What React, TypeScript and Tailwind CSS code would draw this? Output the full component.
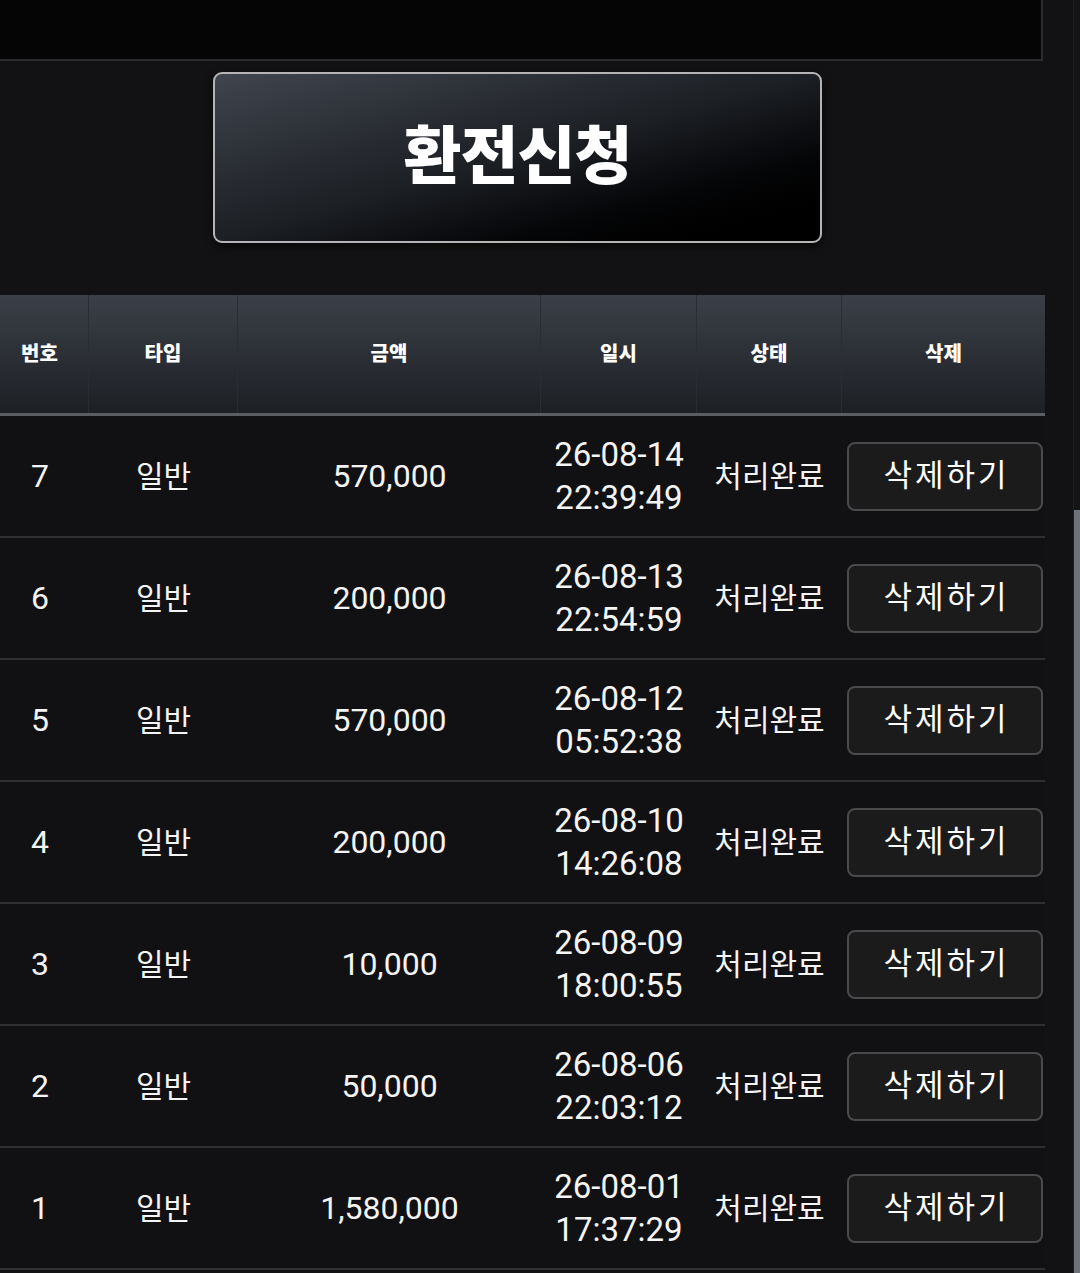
import React from 'react';

const rows = [
  { no: 7, type: '일반', amount: '570,000', date: '26-08-14', time: '22:39:49' },
  { no: 6, type: '일반', amount: '200,000', date: '26-08-13', time: '22:54:59' },
  { no: 5, type: '일반', amount: '570,000', date: '26-08-12', time: '05:52:38' },
  { no: 4, type: '일반', amount: '200,000', date: '26-08-10', time: '14:26:08' },
  { no: 3, type: '일반', amount: '10,000', date: '26-08-09', time: '18:00:55' },
  { no: 2, type: '일반', amount: '50,000', date: '26-08-06', time: '22:03:12' },
  { no: 1, type: '일반', amount: '1,580,000', date: '26-08-01', time: '17:37:29' },
];

const headers = ['번호', '타입', '금액', '일시', '상태', '삭제'];

const cols = 'grid grid-cols-[89px_149px_303px_156px_145px_203px]';

export default function App() {
  return (
    <main
      className="relative h-[1273px] w-[1080px] overflow-hidden bg-[#121214] text-[#f4f4f4]"
      style={{ fontFamily: "Roboto, 'Noto Sans CJK KR', sans-serif" }}
    >
      <div className="w-[1045px]">
        {/* top panel */}
        <div className="mr-[2px] h-[61px] border-r-2 border-b-2 border-[#2c2c2e] bg-[#050505]" />

        {/* submit button */}
        <div className="pt-[11px] pb-[52px] pl-[213px]">
          <button className="flex h-[171px] w-[609px] items-center justify-center rounded-[9px] border-2 border-[#b4b4b6] bg-gradient-to-br from-[#40454e] via-[#1c1f24] to-[#000000] shadow-[0_4px_10px_rgba(0,0,0,0.6)]">
            <span className="text-[63px] font-black tracking-[-1px] text-white">환전신청</span>
          </button>
        </div>

        {/* table header */}
        <div className={`${cols} h-[121px] border-b-[3px] border-[#5b5e64] bg-gradient-to-b from-[#3b4048] to-[#1d2025]`}>
          {headers.map((h, i) => (
            <div
              key={h}
              className={`flex items-center justify-center text-[20px] font-black text-white ${
                i === 0 ? 'pr-[9px]' : ''
              } ${i < headers.length - 1 ? 'border-r border-[#2a2d33]' : ''}`}
            >
              {h}
            </div>
          ))}
        </div>

        {/* rows */}
        {rows.map((r) => (
          <div key={r.no} className={`${cols} h-[122px] border-b-2 border-[#2e2f32] bg-[#111113]`}>
            <div className="flex items-center justify-center pr-[9px] text-[32px]">{r.no}</div>
            <div className="flex items-center justify-center text-[30px]">{r.type}</div>
            <div className="flex items-center justify-center text-[32px]">{r.amount}</div>
            <div className="flex flex-col items-center justify-center text-[33px] leading-[43px]">
              <span>{r.date}</span>
              <span>{r.time}</span>
            </div>
            <div className="flex items-center justify-center text-[30px]">처리완료</div>
            <div className="flex items-center pl-[5px] pr-[2px]">
              <button className="flex h-[69px] w-full items-center justify-center rounded-[8px] border-2 border-[#4a4a4d] bg-[#1b1b1c] pl-[3px] text-[31px] tracking-[3px] text-white">
                삭제하기
              </button>
            </div>
          </div>
        ))}
      </div>

      {/* scrollbar */}
      <div className="absolute top-0 right-0 h-full w-[7px] border-l border-[#1d1d20] bg-[#141416]">
        <div className="mt-[510px] h-[763px] w-full bg-[#6e737b]" />
      </div>
    </main>
  );
}
